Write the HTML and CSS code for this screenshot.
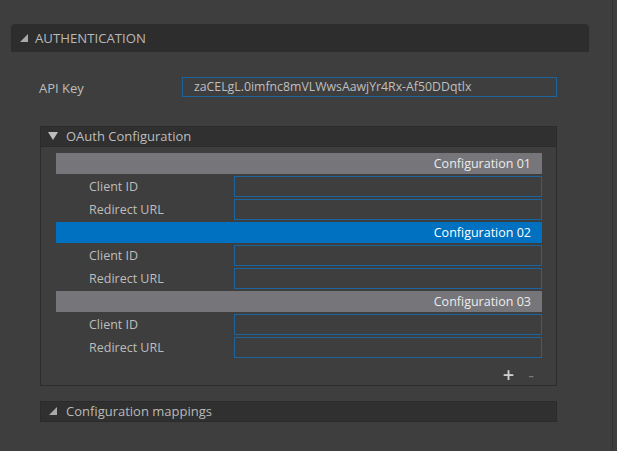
FILE: index.html
```html
<!DOCTYPE html>
<html>
<head>
<meta charset="utf-8">
<link rel="stylesheet" href="styles.css">
</head>
<body>
<div class="page">
  <div class="section">
    <div class="section-header">
      <svg class="tri" width="10" height="10" viewBox="0 0 10 10"><polygon points="9,1 9,9 1,9" fill="#a9a9a9"/></svg>
      <span>AUTHENTICATION</span>
    </div>
    <div class="section-body">
      <div class="field-row">
        <label class="api-label">API Key</label>
        <div class="api-input">zaCELgL.0imfnc8mVLWwsAawjYr4Rx-Af50DDqtlx</div>
      </div>

      <div class="group">
        <div class="group-header">
          <svg class="tri-down" width="10" height="10" viewBox="0 0 10 10"><polygon points="0,1 10,1 5,9" fill="#bdbdbd"/></svg>
          <span>OAuth Configuration</span>
        </div>
        <div class="group-body">
          <div class="config-head">Configuration 01</div>
          <div class="config-row"><span class="cl">Client ID</span><div class="cinput"></div></div>
          <div class="config-row"><span class="cl">Redirect URL</span><div class="cinput"></div></div>
          <div class="config-head active">Configuration 02</div>
          <div class="config-row"><span class="cl">Client ID</span><div class="cinput"></div></div>
          <div class="config-row"><span class="cl">Redirect URL</span><div class="cinput"></div></div>
          <div class="config-head">Configuration 03</div>
          <div class="config-row"><span class="cl">Client ID</span><div class="cinput"></div></div>
          <div class="config-row"><span class="cl">Redirect URL</span><div class="cinput"></div></div>
          <div class="actions">
            <span class="plus">+</span>
            <span class="minus">-</span>
          </div>
        </div>
      </div>

      <div class="collapsed">
        <svg class="tri" width="10" height="10" viewBox="0 0 10 10"><polygon points="9,1 9,9 1,9" fill="#a9a9a9"/></svg>
        <span>Configuration mappings</span>
      </div>
    </div>
  </div>
  <div class="edge"></div>
</div>
</body>
</html>
```

FILE: styles.css
```css
html, body {
  margin: 0;
  padding: 0;
  background: #3e3e3e;
  width: 617px;
  height: 451px;
  overflow: hidden;
  font-family: "Open Sans", "Noto Sans", sans-serif;
  color: #bdbdbd;
}
.page {
  display: flex;
  height: 451px;
}
.section {
  padding: 24px 0 0 11px;
  width: 578px;
}
.edge {
  margin-left: 23px;
  width: 1px;
  background: #333;
  height: 100%;
}
.section-header {
  height: 28px;
  background: #2d2d2d;
  border-radius: 4px 4px 0 0;
  display: flex;
  align-items: center;
  padding-left: 8px;
  font-size: 13.2px;
  color: #b9b9b9;
}
.section-header .tri { margin-right: 6px; margin-top: -1px; }
.section-body {
  padding: 25px 32px 0 29px;
}
.field-row {
  display: flex;
  align-items: center;
  height: 20px;
}
.api-label {
  width: 143px;
  font-size: 13px;
  color: #bdbdbd;
  margin-left: -1px;
  padding-top: 2px;
}
.api-input {
  box-sizing: border-box;
  width: 375px;
  height: 20px;
  border: 1px solid #1a64a0;
  font-size: 12.3px;
  color: #bfbfbf;
  padding-left: 11px;
  line-height: 18px;
}
.group {
  margin-top: 29px;
  border: 1px solid #2b2b2b;
  height: 258px;
}
.group-header {
  box-sizing: border-box;
  height: 20px;
  background: #303030;
  border-bottom: 1px solid #2b2b2b;
  display: flex;
  align-items: center;
  padding-left: 7px;
  padding-bottom: 2px;
  font-size: 13px;
  color: #bdbdbd;
}
.group-header .tri-down { margin-right: 8px; margin-top: 1px; }
.group-body {
  padding: 6px 14px 0 15px;
  display: flex;
  flex-direction: column;
  gap: 2px;
}
.config-head {
  height: 21px;
  background: #767579;
  color: #ececec;
  font-size: 12.5px;
  display: flex;
  align-items: center;
  justify-content: flex-end;
  padding-right: 11px;
}
.config-head.active {
  background: #0070c0;
  color: #ffffff;
}
.config-row {
  display: flex;
  align-items: center;
  height: 21px;
}
.cl {
  width: 145px;
  padding-left: 33px;
  font-size: 12.5px;
  color: #bdbdbd;
}
.cinput {
  flex: 1;
  height: 19px;
  border: 1px solid #1a64a0;
}
.actions {
  display: flex;
  justify-content: flex-end;
  align-items: center;
  gap: 14px;
  padding-right: 8px;
  margin-top: 4px;
  font-size: 20px;
  color: #cfcfcf;
  line-height: 22px;
}
.plus { font-weight: 600; }
.minus { color: #7a7a7a; font-size: 18px; }
.collapsed {
  box-sizing: border-box;
  margin-top: 15px;
  height: 21px;
  background: #303030;
  border: 1px solid #2b2b2b;
  display: flex;
  align-items: center;
  padding-left: 7px;
  padding-bottom: 2px;
  font-size: 13px;
  color: #b9b9b9;
}
.collapsed .tri { margin-right: 8px; margin-top: 1px; }
```
